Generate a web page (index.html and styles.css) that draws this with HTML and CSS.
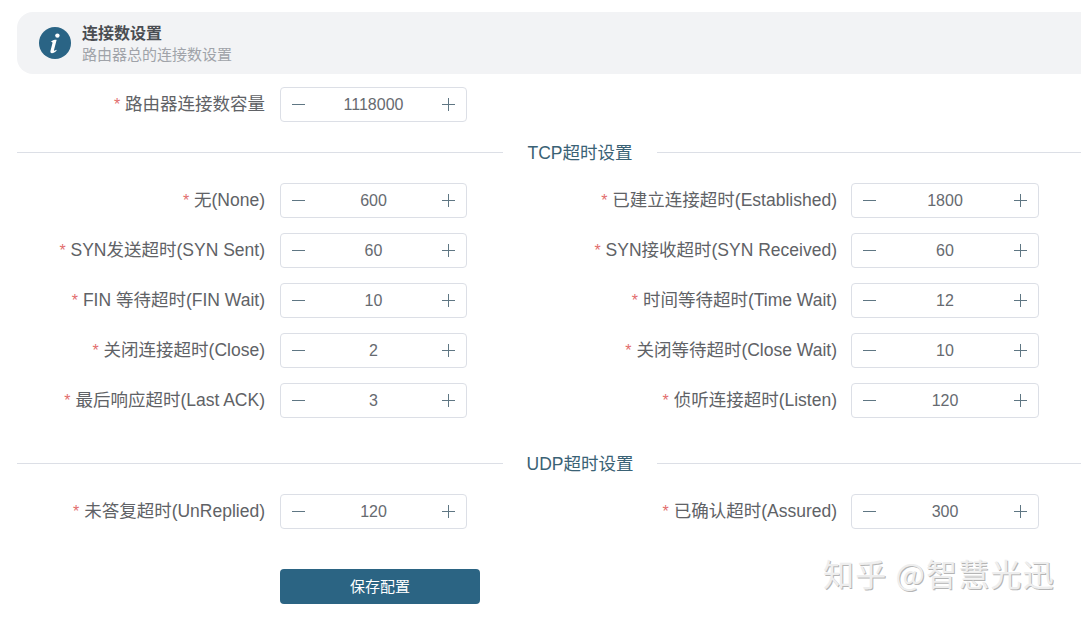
FILE: index.html
```html
<!DOCTYPE html>
<html lang="zh-CN">
<head>
<meta charset="utf-8">
<title>连接数设置</title>
<link rel="stylesheet" href="styles.css">
</head>
<body>
<main class="page">
  <header class="banner">
    <svg class="info-icon" width="32" height="32" viewBox="0 0 32 32" aria-hidden="true">
      <circle cx="16" cy="16" r="16" fill="#2a6485"/>
      <circle cx="18.4" cy="8.6" r="2.2" fill="#fff"/>
      <path d="M12.6 14.2c1.6-1 3.6-1.5 5-1.3l-2.6 10.2c-.2.9.5 1.1 2.2-.3l.5.7c-1.7 1.9-3.3 2.7-4.7 2.7-1.4 0-1.9-.9-1.5-2.5l2-7.7c.1-.6-.2-.9-1.7-.9z" fill="#fff"/>
    </svg>
    <div class="banner-text">
      <div class="banner-title">连接数设置</div>
      <div class="banner-sub">路由器总的连接数设置</div>
    </div>
  </header>

  <div class="row first-row">
    <div class="field"><label class="lbl"><span class="req">*</span> 路由器连接数容量</label><div class="stepper"><span class="op minus"></span><span class="val">1118000</span><span class="op plus"></span></div></div>
  </div>

  <div class="divider"><span class="divider-text">TCP超时设置</span></div>

  <div class="grid">
    <div class="field"><label class="lbl"><span class="req">*</span> 无(None)</label><div class="stepper"><span class="op minus"></span><span class="val">600</span><span class="op plus"></span></div></div>
    <div class="field"><label class="lbl"><span class="req">*</span> 已建立连接超时(Established)</label><div class="stepper wide"><span class="op minus"></span><span class="val">1800</span><span class="op plus"></span></div></div>
    <div class="field"><label class="lbl"><span class="req">*</span> SYN发送超时(SYN Sent)</label><div class="stepper"><span class="op minus"></span><span class="val">60</span><span class="op plus"></span></div></div>
    <div class="field"><label class="lbl"><span class="req">*</span> SYN接收超时(SYN Received)</label><div class="stepper wide"><span class="op minus"></span><span class="val">60</span><span class="op plus"></span></div></div>
    <div class="field"><label class="lbl"><span class="req">*</span> FIN 等待超时(FIN Wait)</label><div class="stepper"><span class="op minus"></span><span class="val">10</span><span class="op plus"></span></div></div>
    <div class="field"><label class="lbl"><span class="req">*</span> 时间等待超时(Time Wait)</label><div class="stepper wide"><span class="op minus"></span><span class="val">12</span><span class="op plus"></span></div></div>
    <div class="field"><label class="lbl"><span class="req">*</span> 关闭连接超时(Close)</label><div class="stepper"><span class="op minus"></span><span class="val">2</span><span class="op plus"></span></div></div>
    <div class="field"><label class="lbl"><span class="req">*</span> 关闭等待超时(Close Wait)</label><div class="stepper wide"><span class="op minus"></span><span class="val">10</span><span class="op plus"></span></div></div>
    <div class="field"><label class="lbl"><span class="req">*</span> 最后响应超时(Last ACK)</label><div class="stepper"><span class="op minus"></span><span class="val">3</span><span class="op plus"></span></div></div>
    <div class="field"><label class="lbl"><span class="req">*</span> 侦听连接超时(Listen)</label><div class="stepper wide"><span class="op minus"></span><span class="val">120</span><span class="op plus"></span></div></div>
  </div>

  <div class="divider udp"><span class="divider-text">UDP超时设置</span></div>

  <div class="grid">
    <div class="field"><label class="lbl"><span class="req">*</span> 未答复超时(UnReplied)</label><div class="stepper"><span class="op minus"></span><span class="val">120</span><span class="op plus"></span></div></div>
    <div class="field"><label class="lbl"><span class="req">*</span> 已确认超时(Assured)</label><div class="stepper wide"><span class="op minus"></span><span class="val">300</span><span class="op plus"></span></div></div>
  </div>

  <div class="actions"><button class="save" type="button">保存配置</button></div>
</main>
<div class="watermark">知乎 @智慧光迅</div>
</body>
</html>
```
FILE: styles.css
```css
* { box-sizing: border-box; }
html, body { margin: 0; padding: 0; height: 620px; overflow: hidden; background: #fff; }
body { font-family: "Liberation Sans", "Noto Sans CJK SC", sans-serif; color: #606266; position: relative; }
.page { width: 1100px; padding: 12px 0 0 17px; }
.banner { height: 62px; background: #f2f3f5; border-radius: 16px; display: flex; align-items: center; padding-left: 22px; gap: 11px; }
.info-icon { flex: none; }
.banner-text { display: flex; flex-direction: column; padding-top: 7px; }
.banner-title { font-size: 16px; line-height: 20px; font-weight: 700; color: #4a4d52; margin-top: -3px; }
.banner-sub { font-size: 15px; line-height: 22px; color: #a0a3a9; }
.first-row { margin-top: 13px; }
.row, .grid { display: grid; grid-template-columns: 571px 1fr; row-gap: 15px; }
.field { display: flex; align-items: center; height: 35px; }
.lbl { width: 248px; flex: none; text-align: right; font-size: 17.5px; line-height: 35px; white-space: nowrap; }
.field:nth-child(even) .lbl { width: 249px; }
.req { color: #e26d6d; font-size: 16px; }
.stepper { margin-left: 15px; width: 187px; height: 35px; border: 1px solid #dcdfe6; border-radius: 4px; display: flex; align-items: center; justify-content: space-between; padding: 0 11px; background: #fff; }
.stepper.wide { width: 188px; margin-left: 14px; }
.op { width: 13px; height: 13px; position: relative; flex: none; }
.op::before, .plus::after { content: ""; position: absolute; background: #5f7683; }
.op::before { left: 0; right: 0; top: 6px; height: 1px; }
.plus::after { top: 0; bottom: 0; left: 6px; width: 1px; }
.val { font-size: 16px; color: #666a70; }
.divider { height: 1px; background: #dcdfe6; margin: 30px 0 30px; position: relative; width: 1064px; }
.divider.udp { margin-top: 45px; }
.divider-text { position: absolute; left: 486px; top: -9px; width: 154px; text-align: center; background: #fff; font-size: 17.5px; line-height: 20px; color: #3a6275; }
.actions { margin: 40px 0 0 263px; }
.save { width: 200px; height: 35px; border: 0; border-radius: 4px; background: #2b6483; color: #fff; font: inherit; font-size: 15px; line-height: 33px; padding: 0; }
.watermark { position: absolute; left: 823px; top: 553px; font-family: "Noto Sans CJK SC", sans-serif; font-size: 31px; line-height: 40px; letter-spacing: 1.2px; color: #eeeeee; text-shadow: 1px 1px 0 #b5b5b5; white-space: nowrap; }
```
